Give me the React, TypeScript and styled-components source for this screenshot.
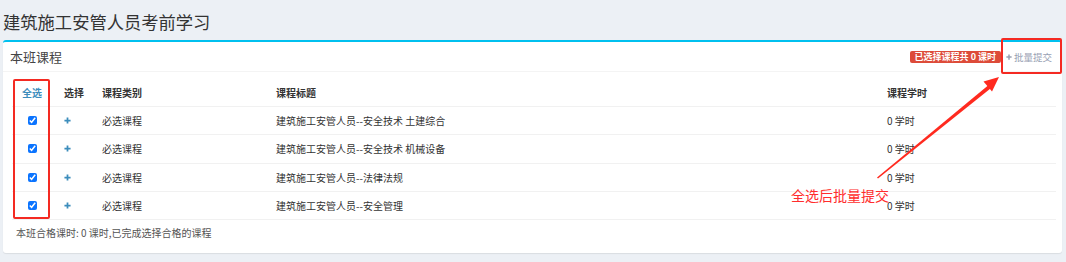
import React from 'react';
import styled, { createGlobalStyle } from 'styled-components';

const Global = createGlobalStyle`
  html, body { margin: 0; padding: 0; background: #ecf0f5; }
  body { font-family: "Noto Sans CJK SC", "Noto Sans", sans-serif; color: #333; }
  * { box-sizing: border-box; }
`;

const Page = styled.div`
  position: relative;
  width: 1066px;
  height: 262px;
  padding: 0 4px 0 3px;
  overflow: hidden;
`;

const PageTitle = styled.h1`
  margin: 0;
  height: 40px;
  padding-top: 9px;
  font-size: 17.3px;
  line-height: 25px;
  font-weight: 400;
  color: #333;
`;

const Box = styled.section`
  background: #fff;
  border-top: 2px solid #00c0ef;
  border-radius: 3px;
  box-shadow: 0 1px 1px rgba(0, 0, 0, 0.08);
`;

const BoxHeader = styled.header`
  display: flex;
  align-items: center;
  height: 30px;
  padding: 0 0 0 7px;
  border-bottom: 1px solid #f4f4f4;
`;

const BoxTitle = styled.h3`
  margin: 0;
  flex: 1;
  font-size: 13px;
  font-weight: 400;
  color: #444;
`;

const Badge = styled.span`
  display: inline-flex;
  align-items: center;
  height: 12px;
  padding: 0 5px;
  border-radius: 2px;
  background: #dd4b39;
  color: #fff;
  font-size: 9px;
  font-weight: 700;
  white-space: nowrap;
`;

const ToolButton = styled.button`
  display: inline-flex;
  align-items: center;
  gap: 2px;
  width: 61px;
  height: 30px;
  padding: 0 0 0 5px;
  border: 0;
  background: transparent;
  color: #97a0b3;
  font-family: inherit;
  font-size: 9.5px;
  cursor: pointer;
`;

const BoxBody = styled.div`
  padding: 6px 6px 0 9px;
`;

const Row = styled.div<{ $head?: boolean }>`
  display: grid;
  grid-template-columns: 40px 42px 174px 611px 1fr;
  align-items: center;
  height: ${(p) => (p.$head ? '29px' : '28.3px')};
  border-bottom: 1px solid #f1f1f1;
  font-size: 10px;
  font-weight: ${(p) => (p.$head ? 700 : 400)};
  color: #333;
`;

const Cell = styled.div<{ $align?: 'center' | 'left'; $pad?: number; $accent?: boolean }>`
  display: flex;
  align-items: center;
  justify-content: ${(p) => (p.$align === 'center' ? 'center' : 'flex-start')};
  padding-left: ${(p) => p.$pad ?? 8}px;
  color: ${(p) => (p.$accent ? '#3c8dbc' : 'inherit')};
  white-space: nowrap;
`;

const Check = styled.input`
  width: 9px;
  height: 9px;
  margin: 0;
  accent-color: #0b74ff;
`;

const Footer = styled.p`
  margin: 0;
  padding: 6px 0 13px 4px;
  font-size: 10px;
  line-height: 14px;
  color: #555;
`;

const Highlight = styled.div<{ $l: number; $t: number; $w: number; $h: number }>`
  position: absolute;
  left: ${(p) => p.$l}px;
  top: ${(p) => p.$t}px;
  width: ${(p) => p.$w}px;
  height: ${(p) => p.$h}px;
  border: 2px solid #f42a22;
  border-radius: 2px;
  pointer-events: none;
`;

const Note = styled.span`
  position: absolute;
  left: 791px;
  top: 185px;
  font-size: 14px;
  line-height: 20px;
  color: #ff2d2d;
  white-space: nowrap;
`;

const Overlay = styled.svg`
  position: absolute;
  left: 0;
  top: 0;
  pointer-events: none;
`;

const Plus = ({ color, size }: { color: string; size: number }) => (
  <svg width={size} height={size} viewBox="0 0 8 8">
    <path d="M4 0.5v7M0.5 4h7" stroke={color} strokeWidth="2" />
  </svg>
);

const courses = [
  '建筑施工安管人员--安全技术 土建综合',
  '建筑施工安管人员--安全技术 机械设备',
  '建筑施工安管人员--法律法规',
  '建筑施工安管人员--安全管理',
];

export default function App() {
  return (
    <>
      <Global />
      <Page>
        <PageTitle>建筑施工安管人员考前学习</PageTitle>
        <Box>
          <BoxHeader>
            <BoxTitle>本班课程</BoxTitle>
            <Badge>已选择课程共 0 课时</Badge>
            <ToolButton>
              <Plus color="#97a0b3" size={6} />
              批量提交
            </ToolButton>
          </BoxHeader>
          <BoxBody>
            <Row $head>
              <Cell $align="center" $pad={0} $accent>全选</Cell>
              <Cell $pad={12}>选择</Cell>
              <Cell>课程类别</Cell>
              <Cell>课程标题</Cell>
              <Cell>课程学时</Cell>
            </Row>
            {courses.map((c) => (
              <Row key={c}>
                <Cell $align="center" $pad={0}>
                  <Check type="checkbox" checked readOnly />
                </Cell>
                <Cell $pad={12}>
                  <Plus color="#3c8dbc" size={7} />
                </Cell>
                <Cell>必选课程</Cell>
                <Cell>{c}</Cell>
                <Cell>0 学时</Cell>
              </Row>
            ))}
            <Footer>本班合格课时: 0 课时,已完成选择合格的课程</Footer>
          </BoxBody>
        </Box>
        <Highlight $l={13} $t={79} $w={37} $h={140} />
        <Highlight $l={1001} $t={38} $w={61} $h={36} />
        <Note>全选后批量提交</Note>
        <Overlay width={1066} height={262}>
          <polygon points="877,177.5 878,178.5 990.5,88.5 988,85.5" fill="#ff2a1f" />
          <polygon points="999,77 983.5,81.5 992,91.5" fill="#ff2a1f" />
        </Overlay>
      </Page>
    </>
  );
}
